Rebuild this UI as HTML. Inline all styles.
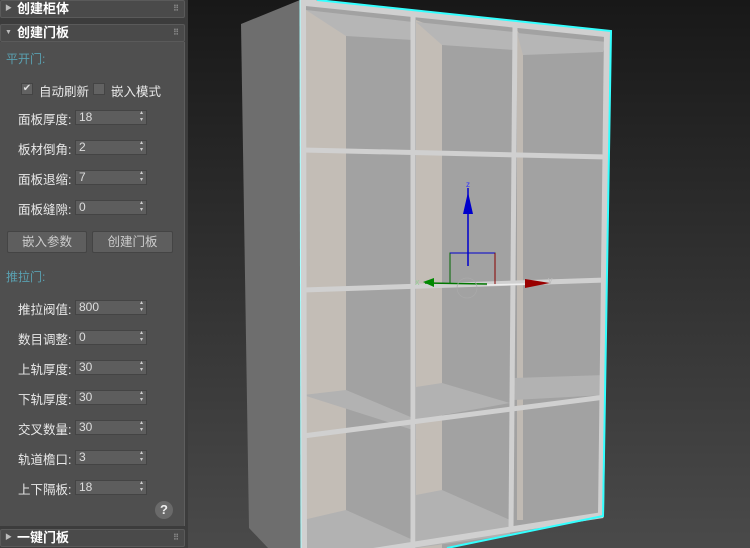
<!DOCTYPE html>
<html><head><meta charset="utf-8"><style>
*{margin:0;padding:0;box-sizing:border-box}
body{width:750px;height:548px;overflow:hidden;background:#2a2a2a;font-family:"Liberation Sans","Noto Sans CJK SC",sans-serif;position:relative}
#panel{position:absolute;left:0;top:0;width:188px;height:548px;background:#3c3c3c}
.hdr{position:absolute;left:0;width:185px;height:18px;background:#4a4a4a;border:1px solid #5a5a5a;border-radius:2px;color:#fff;font-weight:bold;font-size:13px;line-height:16px;padding-left:16px}
.hdr .tri{position:absolute;left:4px;top:0;font-size:7px;color:#bbb}
.hdr .dots{position:absolute;right:6px;top:0;font-size:8px;color:#888;letter-spacing:-1px}
#body{position:absolute;left:0;top:42px;width:185px;height:484px;background:#4f4f4f;border-right:1px solid #5e5e5e}
.sec{position:absolute;left:6px;color:#5aa0b0;font-size:12px}
.lbl{position:absolute;left:18px;color:#e8e8e8;font-size:12.5px}
.inp{position:absolute;left:75px;width:72px;height:15px;background:#5d5d5d;border:1px solid #444;color:#ddd;font-size:12px;line-height:13px;padding-left:3px}
.inp:after{content:"▴\A▾";white-space:pre;position:absolute;right:3px;top:-1px;font-size:6px;line-height:7px;color:#ccc}
.btn{position:absolute;top:189px;height:22px;background:#5e5e5e;border:1px solid #444;border-radius:2px;color:#ccc;font-size:12.5px;text-align:center;line-height:20px}
.cb{position:absolute;width:12px;height:12px;background:#626262;border:1px solid #444}
</style></head><body>
<div id="panel">
<div class="hdr" style="top:0"><span class="tri">▶</span>创建柜体<span class="dots">⠿</span></div>
<div class="hdr" style="top:24px"><span class="tri">▼</span>创建门板<span class="dots">⠿</span></div>
<div id="body">
<div class="sec" style="top:8px">平开门:</div>
<div class="cb" style="left:21px;top:41px;color:#ddd;font-size:10px;line-height:10px;text-align:center">✔</div>
<div class="lbl" style="left:39px;top:39px">自动刷新</div>
<div class="cb" style="left:93px;top:41px"></div>
<div class="lbl" style="left:111px;top:39px">嵌入模式</div>
<div class="lbl" style="top:67px">面板厚度:</div><div class="inp" style="top:68px">18</div>
<div class="lbl" style="top:97px">板材倒角:</div><div class="inp" style="top:98px">2</div>
<div class="lbl" style="top:127px">面板退缩:</div><div class="inp" style="top:128px">7</div>
<div class="lbl" style="top:157px">面板缝隙:</div><div class="inp" style="top:158px">0</div>
<div class="btn" style="left:7px;width:80px">嵌入参数</div>
<div class="btn" style="left:92px;width:81px">创建门板</div>
<div class="sec" style="top:226px">推拉门:</div>
<div class="lbl" style="top:257px">推拉阀值:</div><div class="inp" style="top:258px">800</div>
<div class="lbl" style="top:287px">数目调整:</div><div class="inp" style="top:288px">0</div>
<div class="lbl" style="top:317px">上轨厚度:</div><div class="inp" style="top:318px">30</div>
<div class="lbl" style="top:347px">下轨厚度:</div><div class="inp" style="top:348px">30</div>
<div class="lbl" style="top:377px">交叉数量:</div><div class="inp" style="top:378px">30</div>
<div class="lbl" style="top:407px">轨道檐口:</div><div class="inp" style="top:408px">3</div>
<div class="lbl" style="top:437px">上下隔板:</div><div class="inp" style="top:438px">18</div>
<div style="position:absolute;left:155px;top:459px;width:18px;height:18px;border-radius:50%;background:#6a6a6a;color:#eee;font-weight:bold;font-size:13px;text-align:center;line-height:18px">?</div>
</div>
<div class="hdr" style="top:529px"><span class="tri">▶</span>一键门板<span class="dots">⠿</span></div>
</div>
<svg style="position:absolute;left:188px;top:0" width="562" height="548" viewBox="188 0 562 548">
<defs><linearGradient id="bgv" x1="0" y1="0" x2="0" y2="1"><stop offset="0" stop-color="#181818"/><stop offset="1" stop-color="#4a4a4a"/></linearGradient></defs>
<rect x="188" y="0" width="562" height="548" fill="url(#bgv)"/>
<polygon points="241,24 300,0 302,548 268,548 249,528" fill="#6e6e6e"/>
<polygon points="300,0 611,32 603,516 447,548 302,548" fill="#a2a2a2"/>
<polygon points="306,10 346,20 346,548 306,548" fill="#c3bdb6"/>
<polygon points="416,20 442,30 442,435 416,440" fill="#c3bdb6"/>
<polygon points="416,440 442,430 442,548 416,548" fill="#c3bdb6"/>
<polygon points="517,30 523,40 523,520 517,520" fill="#c0bab3"/>
<polygon points="306,10 413,22 413,40 346,36" fill="#b6b6b6"/>
<polygon points="416,22 514,32 514,50 442,45" fill="#b6b6b6"/>
<polygon points="517,33 607,42 603,52 523,55" fill="#b6b6b6"/>
<polygon points="303,395 346,390 413,418 413,430" fill="#b2b2b2"/>
<polygon points="416,387 442,383 510,403 416,420" fill="#b2b2b2"/>
<polygon points="514,378 605,375 605,395 514,400" fill="#b2b2b2"/>
<polygon points="303,520 346,510 413,540 413,548 303,548" fill="#b2b2b2"/>
<polygon points="416,495 442,490 510,520 510,535 416,548" fill="#b2b2b2"/>
<g stroke="#d0d0d0" fill="none">
<line x1="303" y1="150" x2="607" y2="157" stroke-width="5"/>
<line x1="303" y1="290" x2="606" y2="280" stroke-width="5"/>
<line x1="303" y1="436" x2="605" y2="397" stroke-width="5"/>
<line x1="303" y1="562" x2="603" y2="515" stroke-width="6"/>
<line x1="301" y1="2" x2="610" y2="34" stroke-width="7"/>
<line x1="303" y1="0" x2="304" y2="548" stroke-width="6"/>
<line x1="413" y1="12" x2="413" y2="548" stroke-width="5"/>
<line x1="515" y1="25" x2="511" y2="530" stroke-width="5"/>
<line x1="607" y1="32" x2="601" y2="516" stroke-width="6"/>
</g>
<polyline points="317,0 611,31 603,516 447,548" fill="none" stroke="#3ff" stroke-width="2"/>
<line x1="300" y1="0" x2="301" y2="548" stroke="#aff" stroke-width="1"/>
<line x1="468" y1="188" x2="468" y2="266" stroke="#00c" stroke-width="1.5"/>
<polygon points="468,192 463,214 473,214" fill="#00c"/>
<text x="466" y="187" font-size="8" fill="#33f" font-family="Liberation Sans">z</text>
<polyline points="450,283 450,253 495,253 495,285" fill="none" stroke="#060"/>
<line x1="450" y1="253" x2="495" y2="253" stroke="#00c"/>
<line x1="495" y1="253" x2="495" y2="285" stroke="#800"/>
<line x1="425" y1="283" x2="487" y2="284" stroke="#070" stroke-width="1.5"/>
<line x1="487" y1="285" x2="530" y2="284" stroke="#eee" stroke-width="1.5"/>
<polygon points="423,282 434,278 434,287" fill="#080"/>
<polygon points="550,283 525,279 525,288" fill="#900"/>
<circle cx="467" cy="288" r="10" fill="none" stroke="#aaa" stroke-width="0.7"/>
<text x="415" y="285" font-size="9" fill="#9c9" font-family="Liberation Sans">x</text>
<text x="548" y="283" font-size="9" fill="#bbb" font-family="Liberation Sans">y</text>
</svg>
</body></html>
